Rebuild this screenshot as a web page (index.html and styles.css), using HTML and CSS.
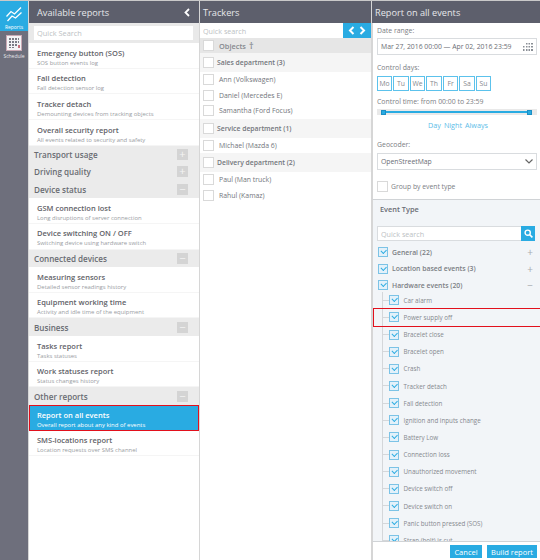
FILE: index.html
```html
<!DOCTYPE html>
<html lang="en">
<head>
    <meta charset="UTF-8">
    <title>Report on all events</title>
    <link rel="stylesheet" href="styles.css">
</head>
<body>
    <div class="app">
        <!-- NAV -->
        <nav class="nav">
            <div class="nav-item active">
                <svg width="16" height="15" viewBox="0 0 16 15"><path d="M0.5 9.5 L5 4.5 L8.5 7 L15 0.5 M1.5 14 L6 9 L9.5 11 L15.5 5.5" fill="none" stroke="#fff" stroke-width="1.3"/></svg>
                <span>Reports</span>
            </div>
            <div class="nav-item">
                <svg width="16" height="16" viewBox="0 0 16 16"><rect x=".5" y=".5" width="15" height="15" fill="#f4f4f6" stroke="#c9a9b4"/><path d="M3 3h2v2H3zM6 3h2v2H6zM9 3h2v2H9zM12 3h1v2h-1zM3 6h2v2H3zM6 6h2v2H6zM9 6h2v2H9zM12 6h1v2h-1zM3 9h2v2H3zM6 9h2v2H6zM9 9h2v2H9zM3 12h2v1H3zM6 12h2v1H6z" fill="#7b7c86"/><rect x="12" y="10" width="2" height="3" fill="#c8707c"/></svg>
                <span>Schedule</span>
            </div>
        </nav>

        <!-- AVAILABLE REPORTS -->
        <section class="panel reports">
            <header class="panel-head">Available reports
                <svg class="collapse" width="6" height="9" viewBox="0 0 6 9"><path d="M5 1 1.5 4.5 5 8" fill="none" stroke="#fff" stroke-width="1.8"/></svg>
            </header>
            <div class="search-wrap"><input class="search" placeholder="Quick Search"></div>
            <div class="report"><b>Emergency button (SOS)</b><small>SOS button events log</small></div>
            <div class="report"><b>Fall detection</b><small>Fall detection sensor log</small></div>
            <div class="report"><b>Tracker detach</b><small>Demounting devices from tracking objects</small></div>
            <div class="report"><b>Overall security report</b><small>All events related to security and safety</small></div>
            <div class="group short">Transport usage <i class="toggle">+</i></div>
            <div class="group short">Driving quality <i class="toggle">+</i></div>
            <div class="group">Device status <i class="toggle open">&minus;</i></div>
            <div class="report"><b>GSM connection lost</b><small>Long disruptions of server connection</small></div>
            <div class="report"><b>Device switching ON / OFF</b><small>Switching device using hardware switch</small></div>
            <div class="group">Connected devices <i class="toggle open">&minus;</i></div>
            <div class="report"><b>Measuring sensors</b><small>Detailed sensor readings history</small></div>
            <div class="report"><b>Equipment working time</b><small>Activity and idle time of the equipment</small></div>
            <div class="group">Business <i class="toggle open">&minus;</i></div>
            <div class="report"><b>Tasks report</b><small>Tasks statuses</small></div>
            <div class="report"><b>Work statuses report</b><small>Status changes history</small></div>
            <div class="group">Other reports <i class="toggle open">&minus;</i></div>
            <div class="report selected"><b>Report on all events</b><small>Overall report about any kind of events</small></div>
            <div class="report"><b>SMS-locations report</b><small>Location requests over SMS channel</small></div>
        </section>

        <!-- TRACKERS -->
        <section class="panel trackers">
            <header class="panel-head">Trackers</header>
            <div class="tracker-search">
                <input class="search-plain" placeholder="Quick search">
                <div class="arrows">
                    <svg width="7" height="9" viewBox="0 0 7 9"><path d="M5.5 1 2 4.5 5.5 8" fill="none" stroke="#fff" stroke-width="2"/></svg>
                    <svg width="7" height="9" viewBox="0 0 7 9"><path d="M1.5 1 5 4.5 1.5 8" fill="none" stroke="#fff" stroke-width="2"/></svg>
                </div>
            </div>
            <div class="objects"><i class="box"></i>Objects <span class="sort">&#8224;</span></div>
            <div class="dept"><i class="box"></i>Sales department (3)</div>
            <div class="obj"><i class="box"></i>Ann (Volkswagen)</div>
            <div class="obj"><i class="box"></i>Daniel (Mercedes E)</div>
            <div class="obj"><i class="box"></i>Samantha (Ford Focus)</div>
            <div class="dept"><i class="box"></i>Service department (1)</div>
            <div class="obj"><i class="box"></i>Michael (Mazda 6)</div>
            <div class="dept"><i class="box"></i>Delivery department (2)</div>
            <div class="obj"><i class="box"></i>Paul (Man truck)</div>
            <div class="obj"><i class="box"></i>Rahul (Kamaz)</div>
        </section>

        <!-- REPORT SETTINGS -->
        <section class="panel settings">
            <header class="panel-head">Report on all events</header>
            <div class="form">
                <label class="lbl first">Date range:</label>
                <div class="field">Mar 27, 2016 00:00 — Apr 02, 2016 23:59
                    <svg width="11" height="8" viewBox="0 0 11 8"><path d="M4 0h1.5v1.5H4zM6.5 0H8v1.5H6.5zM9 0h2v1.5H9zM1 3h1.5v1.5H1zM4 3h1.5v1.5H4zM6.5 3H8v1.5H6.5zM9 3h2v1.5H9zM1 6h1.5v2H1zM4 6h1.5v2H4zM6.5 6H8v2H6.5zM9 6h2v2H9z" fill="#8a8f96"/></svg>
                </div>
                <label class="lbl days-lbl">Control days:</label>
                <div class="days">
                    <span>Mo</span><span>Tu</span><span>We</span><span>Th</span><span>Fr</span><span>Sa</span><span>Su</span>
                </div>
                <label class="lbl time-lbl">Control time: from 00:00 to 23:59</label>
                <div class="slider"><div class="track"><i class="knob"></i><i class="knob"></i></div></div>
                <div class="presets"><span>Day</span><span>Night</span><span>Always</span></div>
                <label class="lbl geo-lbl">Geocoder:</label>
                <div class="field select">OpenStreetMap
                    <svg width="8" height="5" viewBox="0 0 8 5"><path d="M.5.5 4 4 7.5.5" fill="none" stroke="#666" stroke-width="1.2"/></svg>
                </div>
                <div class="group-by"><i class="box"></i>Group by event type</div>
            </div>
            <div class="events">
                <div class="events-title">Event Type</div>
                <div class="event-search">
                    <input class="search-plain" placeholder="Quick search">
                    <div class="search-btn">
                        <svg width="9" height="9" viewBox="0 0 9 9"><circle cx="3.7" cy="3.7" r="2.6" fill="none" stroke="#fff" stroke-width="1.4"/><path d="M5.7 5.7 8.4 8.4" stroke="#fff" stroke-width="1.6"/></svg>
                    </div>
                </div>
                <div class="ev-group"><i class="check"></i>General (22)<span class="ev-toggle">+</span></div>
                <div class="ev-group"><i class="check"></i>Location based events (3)<span class="ev-toggle">+</span></div>
                <div class="ev-group"><i class="check"></i>Hardware events (20)<span class="ev-toggle">&minus;</span></div>
                <div class="ev-list">
                    <div class="ev"><i class="check"></i>Car alarm</div>
                    <div class="ev marked"><i class="check"></i>Power supply off</div>
                    <div class="ev"><i class="check"></i>Bracelet close</div>
                    <div class="ev"><i class="check"></i>Bracelet open</div>
                    <div class="ev"><i class="check"></i>Crash</div>
                    <div class="ev"><i class="check"></i>Tracker detach</div>
                    <div class="ev"><i class="check"></i>Fall detection</div>
                    <div class="ev"><i class="check"></i>Ignition and inputs change</div>
                    <div class="ev"><i class="check"></i>Battery Low</div>
                    <div class="ev"><i class="check"></i>Connection loss</div>
                    <div class="ev"><i class="check"></i>Unauthorized movement</div>
                    <div class="ev"><i class="check"></i>Device switch off</div>
                    <div class="ev"><i class="check"></i>Device switch on</div>
                    <div class="ev"><i class="check"></i>Panic button pressed (SOS)</div>
                    <div class="ev"><i class="check"></i>Strap (bolt) is cut</div>
                </div>
            </div>
            <footer class="actions">
                <button>Cancel</button>
                <button>Build report</button>
            </footer>
        </section>
    </div>
</body>
</html>
```
FILE: styles.css
```css
* {
    box-sizing: border-box;
}

html, body {
    margin: 0;
    height: 100%;
    overflow: hidden;
}

body {
    font-family: "Open Sans", sans-serif;
    font-size: 8px;
    color: #6b6e75;
    background: #fff;
}

i {
    font-style: normal;
}

input {
    font-family: inherit;
    outline: none;
}

input::placeholder {
    color: #bcbfc4;
    opacity: 1;
}

.app {
    display: flex;
    width: 540px;
    height: 560px;
    padding-top: 1px;
    background: linear-gradient(#c9c9c9 1px, transparent 1px);
}

/* NAV */
.nav {
    width: 28px;
    background: #6e6f7c;
    flex: none;
}

.nav-item {
    height: 30px;
    display: flex;
    flex-direction: column;
    align-items: center;
    padding-top: 4px;
    color: #e8e8ec;
    font-size: 5px;
    line-height: 7px;
}

.nav-item.active {
    background: #29abe2;
    color: #fff;
    padding-top: 6px;
}

.nav-item svg {
    display: block;
    margin-bottom: 2px;
}

/* PANELS */
.panel {
    display: flex;
    flex-direction: column;
    flex: none;
    overflow: hidden;
}

.reports {
    width: 172px;
    border-left: 1px solid #d6d6d6;
    border-right: 1px solid #d6d6d6;
}

.trackers {
    width: 172px;
    border-right: 1px solid #d6d6d6;
}

.settings {
    width: 168px;
}

.panel-head {
    flex: none;
    height: 22px;
    background: #5d5f6c;
    color: #e6e7ea;
    font-size: 9.2px;
    line-height: 21px;
    padding-left: 8px;
    display: flex;
    justify-content: space-between;
    align-items: center;
}

.trackers .panel-head,
.settings .panel-head {
    padding-left: 3px;
}

.collapse {
    margin-right: 9px;
}

.search-wrap {
    flex: none;
    height: 20px;
    background: #e9e9e9;
    padding: 3px 6px 3px 5px;
}

.search {
    display: block;
    width: 100%;
    height: 14px;
    border: 0;
    padding: 0 3px;
    font-size: 7.4px;
}

/* REPORT LIST */
.report {
    flex: none;
    height: 25.7px;
    padding: 3.5px 8px 0;
    border-bottom: 1px solid #f5f5f5;
    white-space: nowrap;
}

.report b {
    display: block;
    font-size: 7.5px;
    font-weight: 600;
    line-height: 12px;
    color: #5f6268;
}

.report small {
    display: block;
    font-size: 5.95px;
    line-height: 8px;
    color: #9a9da3;
}

.report.selected {
    background: #29abe2;
    outline: 1.5px solid #e2101c;
    outline-offset: -1.5px;
}

.report.selected b,
.report.selected small {
    color: #fff;
}

.group {
    flex: none;
    height: 17.6px;
    background: #ebebeb;
    padding: 0 11px 0 5px;
    font-size: 8.1px;
    font-weight: 600;
    line-height: 17px;
    color: #696c72;
    display: flex;
    justify-content: space-between;
    align-items: center;
}

.group.short {
    height: 17.4px;
}

.toggle {
    width: 11px;
    height: 11px;
    background: #d4d4d4;
    color: #f4f4f4;
    font-size: 11px;
    font-weight: 400;
    line-height: 10px;
    text-align: center;
}

/* TRACKERS */
.tracker-search {
    flex: none;
    display: flex;
    height: 15px;
}

.search-plain {
    flex: 1;
    min-width: 0;
    border: 0;
    padding: 0 3px;
    font-size: 7.2px;
    background: #fff;
}

.arrows {
    width: 28px;
    background: #29abe2;
    display: flex;
    justify-content: space-around;
    align-items: center;
    padding: 0 3px;
}

.box {
    flex: none;
    width: 11px;
    height: 11px;
    background: #fff;
    border: 1px solid #d9d9d9;
}

.objects {
    flex: none;
    height: 15px;
    background: #e6e6e6;
    display: flex;
    align-items: center;
    padding-left: 3px;
    font-weight: 600;
    font-size: 7.4px;
    color: #85888e;
}

.objects .box {
    margin-right: 5px;
}

.sort {
    margin-left: 3px;
    font-size: 9px;
}

.dept {
    flex: none;
    height: 19px;
    background: #f5f5f5;
    display: flex;
    align-items: center;
    padding-left: 3px;
    font-weight: 600;
    font-size: 6.8px;
    color: #73767c;
}

.dept .box {
    margin-right: 3px;
}

.obj {
    flex: none;
    height: 15.5px;
    display: flex;
    align-items: center;
    padding-left: 3px;
    font-size: 6.9px;
    color: #73767c;
}

.obj .box {
    margin-right: 5px;
}

/* SETTINGS */
.form {
    flex: none;
    height: 177px;
    padding: 3px 3px 0 4px;
    border-left: 1px solid #d6d6d6;
    border-bottom: 1px solid #d0d3d6;
}

.lbl {
    display: block;
    font-size: 6.9px;
    line-height: 10px;
    color: #7b7e84;
}

.first {
    margin-top: 0;
}

.field {
    height: 17px;
    margin-top: 2px;
    padding: 0 3px;
    border: 1px solid #d9dcdf;
    display: flex;
    align-items: center;
    justify-content: space-between;
    font-size: 6.85px;
    color: #6b6e75;
}

.days-lbl {
    margin-top: 8px;
}

.days {
    display: flex;
    gap: 1.3px;
    margin-top: 3px;
}

.days span {
    width: 15.2px;
    height: 15px;
    border: 1px solid #5cc2ec;
    text-align: center;
    line-height: 13px;
    font-size: 6.8px;
    color: #85888e;
}

.time-lbl {
    margin-top: 6px;
}

.slider {
    height: 6px;
    margin-top: 2px;
    background: #e9e9e9;
    position: relative;
}

.track {
    height: 2px;
    margin: 0 5px 0 4px;
    background: #29abe2;
    position: relative;
    top: 2px;
    display: flex;
    justify-content: space-between;
    align-items: center;
}

.knob {
    width: 5px;
    height: 5px;
    background: #29abe2;
    border: 1px solid #1d8fc4;
}

.presets {
    display: flex;
    justify-content: center;
    gap: 3px;
    margin-top: 5px;
    padding-left: 2px;
    font-size: 7.2px;
    line-height: 10px;
    color: #5cbde8;
}

.geo-lbl {
    margin-top: 10px;
}

.select {
    margin-top: 3px;
}

.group-by {
    display: flex;
    align-items: center;
    margin-top: 11px;
    font-size: 6.8px;
    color: #7b7e84;
}

.group-by .box {
    margin-right: 3px;
}

/* EVENTS */
.events {
    flex: 1;
    min-height: 0;
    overflow: hidden;
    background: #f2f5f8;
    padding: 4px 2px 0 4px;
    border-left: 1px solid #d6d6d6;
}

.events-title {
    font-size: 7.4px;
    font-weight: 600;
    line-height: 10px;
    color: #6b6e75;
    padding-left: 3px;
}

.event-search {
    display: flex;
    height: 15px;
    margin-top: 12px;
    border: 1px solid #d9dcdf;
    margin-right: 3px;
}

.search-btn {
    width: 14px;
    margin: -1px -1px -1px 0;
    background: #29abe2;
    display: flex;
    align-items: center;
    justify-content: center;
}

.check {
    flex: none;
    width: 10px;
    height: 10px;
    background: #e3f1fa;
    border: 1px solid #7cc3e6;
    border-left-width: 1.5px;
    border-bottom-width: 1.5px;
    margin-right: 4px;
    position: relative;
}

.check::after {
    content: "";
    position: absolute;
    left: 1.5px;
    top: 1px;
    width: 4px;
    height: 2.5px;
    border-left: 1px solid #29abe2;
    border-bottom: 1px solid #29abe2;
    transform: rotate(-45deg);
}

.ev-group {
    height: 16.6px;
    display: flex;
    align-items: center;
    padding-left: 1px;
    font-size: 6.85px;
    font-weight: 600;
    color: #7b7e84;
}

.event-search + .ev-group {
    margin-top: 3px;
}

.ev-toggle {
    margin-left: auto;
    margin-right: 5px;
    font-size: 10px;
    font-weight: 400;
    color: #a8abb0;
}

.ev-list {
    margin-left: 5px;
    margin-top: -2px;
    border-left: 1px solid #d4d7da;
}

.ev {
    height: 17.15px;
    display: flex;
    align-items: center;
    padding-left: 6px;
    font-size: 6.25px;
    color: #85888e;
    position: relative;
}

.ev::before {
    content: "";
    position: absolute;
    left: 0;
    top: 8px;
    width: 6px;
    height: 1px;
    background: #d4d7da;
}

.ev .check {
    margin-right: 4.5px;
}

/* red marker over the row, reaches the window edge */
.ev.marked::after {
    content: "";
    position: absolute;
    left: -10px;
    right: -4px;
    top: -1px;
    bottom: -1px;
    border: 1.5px solid #e2101c;
}

.actions {
    flex: none;
    height: 19px;
    background: #fff;
    border-top: 1px solid #d0d3d6;
    border-left: 1px solid #d6d6d6;
    display: flex;
    justify-content: flex-end;
    gap: 5px;
    padding: 3px 3px 0 0;
}

.actions button {
    height: 13px;
    border: 0;
    padding: 0;
    background: #29abe2;
    color: #fff;
    font-family: inherit;
    font-size: 7.5px;
    white-space: nowrap;
}

.actions button:first-child {
    width: 32px;
}

.actions button:last-child {
    width: 50px;
}
```
